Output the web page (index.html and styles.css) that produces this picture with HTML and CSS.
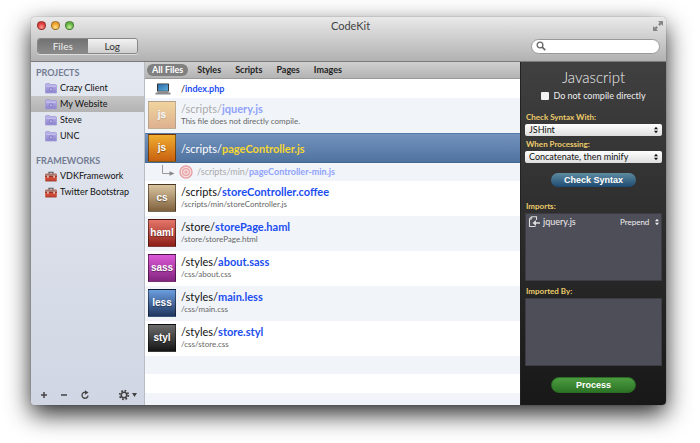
FILE: index.html
```html
<!DOCTYPE html>
<html lang="en">
<head>
<meta charset="UTF-8">
<title>CodeKit</title>
<link rel="stylesheet" href="styles.css">
</head>
<body>
	<svg width="0" height="0" class="symbols">
		<linearGradient id="folderFill" x1="0" y1="0" x2="0" y2="1">
			<stop offset="0" stop-color="#b9b3e8" />
			<stop offset="1" stop-color="#8d84cc" />
		</linearGradient>
		<linearGradient id="screenFill" x1="0" y1="0" x2="1" y2="1">
			<stop offset="0" stop-color="#2a6fae" />
			<stop offset="1" stop-color="#5cabd8" />
		</linearGradient>
		<symbol id="folder" viewBox="0 0 12 11">
			<path d="M.5 10V1.500q0-1 1-1h3l1 1h5q1 0 1 1V10z" fill="url(#folderFill)" stroke="#9f98d6" stroke-width=".7" />
			<path d="M1 3.200h10" stroke="#d3cff5" stroke-width=".8" />
			<circle cx="6" cy="6.400" r="1.700" fill="#b4ade6" stroke="#7f76c0" stroke-width=".8" />
		</symbol>
		<symbol id="toolbox" viewBox="0 0 12 11">
			<path d="M4 3V1.200h4V3" fill="none" stroke="#555" stroke-width="1.100" />
			<rect x=".2" y="2.800" width="11.600" height="7.200" rx=".8" fill="#cf4a36" />
			<rect x=".2" y="2.800" width="11.600" height="2.400" rx=".8" fill="#a9776c" />
			<path d="M.2 5.500h11.600" stroke="#8d2b1c" stroke-width=".8" />
			<rect x="2.200" y="4.600" width="1.500" height="2" fill="#eadfd9" />
			<rect x="8.300" y="4.600" width="1.500" height="2" fill="#eadfd9" />
			<path d="M.4 10h11.200" stroke="#8d2b1c" stroke-width=".8" />
		</symbol>
		<symbol id="updown" viewBox="0 0 6 8">
			<path d="M3 .8L5 3.200H1zM3 7.200L5 4.800H1z" fill="currentColor" />
		</symbol>
	</svg>

	<div class="window">
		<header class="titlebar">
			<div class="titleRow">
				<div class="lights">
					<span class="light red"></span>
					<span class="light yellow"></span>
					<span class="light green"></span>
				</div>
				<h1>CodeKit</h1>
				<button class="fullscreen" aria-label="Full screen">
					<svg width="12" height="12" viewBox="0 0 12 12" fill="#858585">
						<path d="M6 1h5v5L9.300 4.300 7.700 5.900 6.100 4.300l1.600-1.600zM6 11H1V6l1.700 1.700L4.300 6.100l1.600 1.600-1.600 1.600z" />
					</svg>
				</button>
			</div>
			<div class="toolRow">
				<div class="segmented">
					<button class="active">Files</button>
					<button>Log</button>
				</div>
				<label class="search">
					<svg width="10" height="10" viewBox="0 0 10 10" fill="none" stroke="#666">
						<circle cx="4" cy="4" r="2.900" stroke-width="1.300" />
						<path d="M6.200 6.200L9.200 9.200" stroke-width="1.700" />
					</svg>
					<input type="text" aria-label="Search">
				</label>
			</div>
		</header>

		<div class="content">
			<aside class="sidebar">
				<h2>PROJECTS</h2>
				<ul>
					<li><svg><use href="#folder" /></svg>Crazy Client</li>
					<li class="selected"><svg><use href="#folder" /></svg>My Website</li>
					<li><svg><use href="#folder" /></svg>Steve</li>
					<li><svg><use href="#folder" /></svg>UNC</li>
				</ul>
				<h2>FRAMEWORKS</h2>
				<ul>
					<li><svg><use href="#toolbox" /></svg>VDKFramework</li>
					<li><svg><use href="#toolbox" /></svg>Twitter Bootstrap</li>
				</ul>
				<div class="actions">
					<button aria-label="Add">
						<svg width="8" height="8" viewBox="0 0 8 8"><path d="M4 1v6M1 4h6" stroke="#444" stroke-width="1.500" /></svg>
					</button>
					<button aria-label="Remove">
						<svg width="8" height="8" viewBox="0 0 8 8"><path d="M1 4h6" stroke="#444" stroke-width="1.500" /></svg>
					</button>
					<button aria-label="Refresh">
						<svg width="10" height="10" viewBox="0 0 10 10">
							<path d="M5.500 2.300A3 3 0 1 0 8 5.600" fill="none" stroke="#444" stroke-width="1.300" />
							<path d="M5 .2L8.500 2.400 5 4.700z" fill="#444" />
						</svg>
					</button>
					<button class="gear" aria-label="Settings">
						<svg width="19" height="12" viewBox="0 0 19 12">
							<circle cx="6" cy="6" r="4.300" fill="none" stroke="#444" stroke-width="1.800" stroke-dasharray="1.700 1.677" />
							<circle cx="6" cy="6" r="2.800" fill="none" stroke="#444" stroke-width="1.600" />
							<path d="M14 4h5l-2.500 4z" fill="#444" />
						</svg>
					</button>
				</div>
			</aside>

			<main class="files">
				<nav class="filters">
					<a href="#" class="active">All Files</a>
					<a href="#">Styles</a>
					<a href="#">Scripts</a>
					<a href="#">Pages</a>
					<a href="#">Images</a>
				</nav>
				<div class="file short">
					<svg class="laptop" width="16" height="12" viewBox="0 0 16 12">
						<rect x="2" y=".5" width="12" height="8" rx=".6" fill="#333" />
						<rect x="3" y="1.300" width="10" height="6.500" fill="url(#screenFill)" />
						<path d="M2 8.500h12l1.600 2H.4z" fill="#a9a9a9" />
						<path d="M3 9.100h10" stroke="#666" stroke-width=".7" />
						<path d="M.4 10.900h15.200" stroke="#555" stroke-width=".9" />
					</svg>
					<p class="path small">/<b>index.php</b></p>
				</div>
				<div class="file dimmed">
					<span class="badge js">js</span>
					<div>
						<p class="path">/scripts/<b>jquery.js</b></p>
						<p class="output">This file does not directly compile.</p>
					</div>
				</div>
				<div class="file current">
					<span class="badge js">js</span>
					<p class="path">/scripts/<b>pageController.js</b></p>
				</div>
				<div class="file short child">
					<svg width="14" height="14" viewBox="0 0 14 14">
						<path d="M1.500 0v8.500H10" fill="none" stroke="#999" />
						<path d="M8.500 6.300L13.500 8.500 8.500 10.700z" fill="#888" />
					</svg>
					<svg width="14" height="14" viewBox="0 0 14 14" fill="none" stroke="#e5a3a6">
						<circle cx="7" cy="7" r="6" fill="#f8dfe0" stroke-width="1.500" />
						<circle cx="7" cy="7" r="3.400" stroke-width="1.200" />
						<circle cx="7" cy="7" r="1" stroke-width="1.200" />
					</svg>
					<p class="path small">/scripts/min/<b>pageController-min.js</b></p>
				</div>
				<div class="file">
					<span class="badge cs">cs</span>
					<div>
						<p class="path">/scripts/<b>storeController.coffee</b></p>
						<p class="output">/scripts/min/storeController.js</p>
					</div>
				</div>
				<div class="file striped">
					<span class="badge haml">haml</span>
					<div>
						<p class="path">/store/<b>storePage.haml</b></p>
						<p class="output">/store/storePage.html</p>
					</div>
				</div>
				<div class="file">
					<span class="badge sass">sass</span>
					<div>
						<p class="path">/styles/<b>about.sass</b></p>
						<p class="output">/css/about.css</p>
					</div>
				</div>
				<div class="file striped">
					<span class="badge less">less</span>
					<div>
						<p class="path">/styles/<b>main.less</b></p>
						<p class="output">/css/main.css</p>
					</div>
				</div>
				<div class="file">
					<span class="badge styl">styl</span>
					<div>
						<p class="path">/styles/<b>store.styl</b></p>
						<p class="output">/css/store.css</p>
					</div>
				</div>
				<div class="empty"></div>
			</main>

			<section class="inspector">
				<h3>Javascript</h3>
				<label class="check"><input type="checkbox"> Do not compile directly</label>

				<label class="caption" for="syntax">Check Syntax With:</label>
				<div class="select">
					<select id="syntax"><option>JSHint</option></select>
					<svg width="6" height="8"><use href="#updown" /></svg>
				</div>
				<label class="caption" for="processing">When Processing:</label>
				<div class="select">
					<select id="processing"><option>Concatenate, then minify</option></select>
					<svg width="6" height="8"><use href="#updown" /></svg>
				</div>
				<button class="pill blue">Check Syntax</button>

				<p class="caption">Imports:</p>
				<div class="well">
					<div class="import">
						<svg width="12" height="12" viewBox="0 0 12 12" fill="none" stroke="#ddd">
							<path d="M7.500 10.500h-6V3L3.500.8h5V4" stroke-width="1.100" />
							<path d="M1.500 3.200h2.200V1" stroke-width=".8" />
							<path d="M12 7H7" stroke-width="1.500" />
							<path d="M8 4L4.500 7 8 10z" fill="#ddd" stroke="none" />
						</svg>
						<span>jquery.js</span>
						<div class="select plain">
							<select aria-label="Import mode"><option>Prepend</option></select>
							<svg width="6" height="8"><use href="#updown" /></svg>
						</div>
					</div>
				</div>
				<p class="caption">Imported By:</p>
				<div class="well"></div>
				<button class="pill process">Process</button>
			</section>
		</div>
	</div>
</body>
</html>
```
FILE: styles.css
```css
* {
	box-sizing: border-box;
}

body {
	margin: 0;
	padding: 17px 34px 38px 31px;
	min-height: 100vh;
	display: flex;
	overflow: hidden;
	background: #fff;
	font: 9px/12px Lato, "Open Sans", sans-serif;
	color: #111;
}

h1, h2, h3, p, ul {
	margin: 0;
	padding: 0;
	font-weight: normal;
}

button, input, select {
	margin: 0;
	padding: 0;
	border: 0;
	background: none;
	font: inherit;
	color: inherit;
}

.symbols {
	position: absolute;
}

.window {
	flex: 1;
	display: flex;
	flex-direction: column;
	border-radius: 4px;
	overflow: hidden;
	box-shadow: 0 0 1px rgba(0, 0, 0, .6), 0 9px 24px rgba(0, 0, 0, .85);
}

/* title bar */
.titlebar {
	height: 45px;
	padding: 0 6px;
	background: linear-gradient(#e9e9e9, #b1b1b1);
	border-bottom: 1px solid #7a7a7a;
}

.titleRow {
	display: grid;
	grid-template-columns: 1fr auto 1fr;
	align-items: center;
	height: 17px;
	margin-right: -4px;
}

.titleRow h1 {
	font-size: 11px;
	color: #444;
}

.lights {
	display: flex;
	gap: 5px;
}

.light {
	width: 9px;
	height: 9px;
	border-radius: 50%;
	border: 1px solid rgba(0, 0, 0, .35);
}

.red {
	background: radial-gradient(circle at 50% 75%, #ff9b92, #dd3d38 60%);
}

.yellow {
	background: radial-gradient(circle at 50% 75%, #ffe38a, #eda02e 60%);
}

.green {
	background: radial-gradient(circle at 50% 75%, #c5f09b, #63b344 60%);
}

.fullscreen {
	justify-self: end;
	height: 12px;
}

.fullscreen svg, .actions svg {
	display: block;
}

.toolRow {
	display: flex;
	justify-content: space-between;
	align-items: center;
	height: 24px;
}

.segmented {
	display: flex;
	width: 101px;
	height: 16px;
	border: 1px solid #888;
	border-radius: 3px;
	overflow: hidden;
	box-shadow: 0 1px 0 #ddd;
}

.segmented button {
	flex: 1;
	font-size: 10px;
	line-height: 14px;
	background: linear-gradient(#f2f2f2, #cfcfcf);
	color: #333;
}

.segmented .active {
	background: linear-gradient(#727272, #8a8a8a);
	color: #eee;
}

.search {
	display: flex;
	align-items: center;
	gap: 4px;
	width: 129px;
	height: 15px;
	padding: 0 4px;
	border: 1px solid #999;
	border-radius: 8px;
	background: #fff;
}

.search input {
	flex: 1;
	min-width: 0;
	outline: none;
}

/* columns */
.content {
	flex: 1;
	display: grid;
	grid-template-columns: 114px 1fr 146px;
}

.sidebar {
	display: flex;
	flex-direction: column;
	padding-top: 3px;
	background: linear-gradient(#e4e8f0, #d0d6e3);
	border-right: 1px solid #b8bcc4;
}

.sidebar h2 {
	padding-left: 5px;
	font-size: 9px;
	font-weight: bold;
	line-height: 15px;
	color: #737b93;
}

.sidebar ul {
	list-style: none;
	margin-bottom: 9px;
}

.sidebar li {
	display: flex;
	align-items: center;
	gap: 3px;
	height: 16px;
	padding-left: 14px;
}

.sidebar li svg {
	width: 12px;
	height: 11px;
}

.sidebar .selected {
	background: linear-gradient(#c6c6c6, #b3b3b3);
}

.actions {
	display: flex;
	align-items: center;
	gap: 12px;
	margin-top: auto;
	padding: 0 7px 4px 9px;
}

.actions .gear {
	margin-left: auto;
}

/* file list */
.files {
	display: flex;
	flex-direction: column;
	background: #fff;
}

.filters {
	display: flex;
	align-items: center;
	gap: 14px;
	height: 17px;
	padding-left: 2px;
	background: linear-gradient(#d0d0d0, #b3b3b3);
	border-bottom: 1px solid #999;
}

.filters a {
	font-weight: bold;
	line-height: 12px;
	color: #222;
	text-decoration: none;
}

.filters .active {
	margin-right: -5px;
	padding: 0 5px;
	border-radius: 6px;
	background: #808080;
	color: #fff;
}

.file {
	display: flex;
	gap: 5px;
	height: 35px;
	padding: 3px 0 0 3px;
}

.file.short, .file.current {
	align-items: center;
	padding-top: 0;
}

.file.short {
	height: 19px;
}

.laptop {
	margin: 0 5px 0 7px;
}

.striped, .dimmed, .child {
	background: #f1f5fa;
}

.path {
	font-size: 11px;
	line-height: 15px;
}

.path b {
	color: #1c4df0;
}

.path.small {
	font-size: 9px;
	line-height: 12px;
}

.output {
	font-size: 8px;
	line-height: 11px;
	color: #666;
}

.dimmed .path, .child .path {
	color: #aaa;
}

.dimmed .path b, .child .path b {
	color: #8fa2fa;
}

.dimmed .badge {
	opacity: .45;
}

.file.current {
	height: 30px;
	border-top: 1px solid #5878a8;
	border-bottom: 1px solid #456892;
	background: linear-gradient(#7392bd, #4f739f);
	color: #fff;
}

.current .path b {
	color: #f5d732;
}

.file.child {
	height: 18px;
	gap: 4px;
	padding-left: 16px;
}

.badge {
	width: 28px;
	height: 28px;
	border: 1px solid rgba(0, 0, 0, .45);
	font: bold 10px/26px "Liberation Sans", sans-serif;
	text-align: center;
	color: #fff;
	text-shadow: 0 1px 1px rgba(0, 0, 0, .4);
}

.js {
	background: linear-gradient(#efad30, #c8600f);
}

.cs {
	background: linear-gradient(#d9c5a0, #80613d);
}

.haml {
	background: linear-gradient(#e5766b, #8e1f17);
}

.sass {
	background: linear-gradient(#dc58d8, #84257f);
}

.less {
	background: linear-gradient(#6b9ee0, #20365f);
}

.styl {
	background: linear-gradient(#6c6c6c, #151515);
}

.empty {
	flex: 1;
	background: repeating-linear-gradient(#f1f5fa 0 18px, #fff 18px 37px);
}

/* inspector */
.inspector {
	display: flex;
	flex-direction: column;
	padding: 5px 4px 12px;
	border-left: 1px solid #222;
	background: linear-gradient(#404040, #181818);
	color: #eee;
}

.inspector h3 {
	font-size: 15px;
	font-weight: 300;
	line-height: 20px;
	text-align: center;
}

.check {
	display: flex;
	justify-content: center;
	align-items: center;
	gap: 4px;
	height: 18px;
	margin-bottom: 6px;
}

.check input {
	appearance: none;
	width: 8px;
	height: 8px;
	border-radius: 1px;
	background: #f2f2f2;
}

.caption {
	padding-left: 1px;
	font-size: 8px;
	font-weight: bold;
	line-height: 13px;
	color: #edcb6b;
}

.select {
	display: flex;
	align-items: center;
	height: 12px;
	margin-bottom: 2px;
	padding: 0 3px 0 4px;
	border-radius: 2px;
	background: linear-gradient(#fff, #dedede);
	color: #111;
}

.select select {
	flex: 1;
	appearance: none;
	outline: none;
}

.select option {
	color: #222;
}

.pill {
	align-self: center;
	width: 85px;
	height: 14px;
	border-radius: 8px;
	font: bold 9px/14px "Liberation Sans", sans-serif;
	color: #fff;
}

.blue {
	margin: 8px 0 13px;
	background: linear-gradient(#5d8b9f, #1e4a73);
}

.process {
	height: 16px;
	margin-top: 7px;
	border: 1px solid #2b6a25;
	background: linear-gradient(#4c9c40, #2c7426);
}

.well {
	flex: 1;
	margin-bottom: 4px;
	border: 1px solid #3c3c42;
	background: #4e4e59;
}

.import {
	display: flex;
	align-items: center;
	gap: 3px;
	height: 15px;
	padding: 0 1px 0 2px;
}

.select.plain {
	gap: 4px;
	margin: 0 0 0 auto;
	padding: 0;
	background: none;
	color: #eee;
	font-size: 8px;
}
```
